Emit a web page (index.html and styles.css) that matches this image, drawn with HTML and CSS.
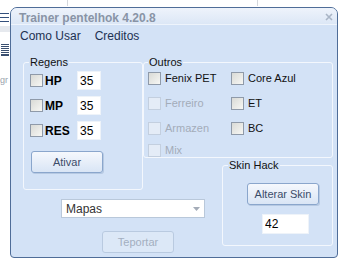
FILE: index.html
```html
<!DOCTYPE html>
<html lang="pt">
<head>
  <meta charset="UTF-8" />
  <title>Trainer pentelhok 4.20.8</title>
  <link rel="stylesheet" href="styles.css">
</head>
<body>

  <!-- restos da janela de trás -->
  <div class="desk">
    <span class="bit bit-a"></span>
    <span class="bit bit-b"></span>
    <span class="bit bit-c"></span>
    <span class="bit bit-d"></span>
    <span class="bit bit-e"></span>
    <span class="bit bit-f"></span>
    <span class="bit bit-g"></span>
    <span class="bit-text">gr</span>
  </div>

  <div class="window">
    <div class="titlebar">
      <span class="title">Trainer pentelhok 4.20.8</span>
      <svg class="close" width="8" height="8" viewBox="0 0 8 8">
        <path d="M1 1 L7 7 M7 1 L1 7" stroke="#a9b5c6" stroke-width="1.6" />
      </svg>
    </div>

    <div class="menu">
      <span>Como Usar</span>
      <span>Creditos</span>
    </div>

    <div class="panel">
      <fieldset class="group regens">
        <legend>Regens</legend>
        <div class="row">
          <span class="box"></span>
          <span class="big">HP</span>
          <input class="num" type="text" value="35" />
        </div>
        <div class="row">
          <span class="box"></span>
          <span class="big">MP</span>
          <input class="num" type="text" value="35" />
        </div>
        <div class="row">
          <span class="box"></span>
          <span class="big">RES</span>
          <input class="num" type="text" value="35" />
        </div>
        <button class="btn ativar">Ativar</button>
      </fieldset>

      <fieldset class="group outros">
        <legend>Outros</legend>
        <div class="checks">
          <label class="chk"><span class="box"></span>Fenix PET</label>
          <label class="chk"><span class="box"></span>Core Azul</label>
          <label class="chk off"><span class="box"></span>Ferreiro</label>
          <label class="chk"><span class="box"></span>ET</label>
          <label class="chk off"><span class="box"></span>Armazen</label>
          <label class="chk"><span class="box"></span>BC</label>
          <label class="chk off"><span class="box"></span>Mix</label>
        </div>
      </fieldset>

      <fieldset class="group skin">
        <legend>Skin Hack</legend>
        <button class="btn">Alterar Skin</button>
        <input class="num skin-num" type="text" value="42" />
      </fieldset>

      <div class="bottom">
        <div class="combo">
          <span>Mapas</span>
          <svg width="7" height="4" viewBox="0 0 7 4">
            <path d="M0 0 L7 0 L3.5 4 Z" fill="#a4acb8" />
          </svg>
        </div>
        <button class="btn off teleport">Teportar</button>
      </div>
    </div>
  </div>

</body>
</html>
```

FILE: styles.css
```css
body {
  margin: 0;
  background-color: #fff;
  font-family: "Liberation Sans", Arial, sans-serif;
  font-size: 11px;
  color: #111;
  position: relative;
  height: 263px;
  overflow: hidden;
}

.desk .bit {
  position: absolute;
  display: block;
}

.bit-a { left: 0; top: 13px; width: 9px; height: 1px; background: #34507c; }
.bit-b { left: 0; top: 17px; width: 9px; height: 1px; background: #34507c; }
.bit-c { left: 0; top: 21px; width: 9px; height: 1px; background: #34507c; }
.bit-d { left: 0; top: 26px; width: 10px; height: 6px; background: #e6e9ee; }
.bit-e { left: 1px; top: 44px; width: 8px; height: 10px; border-top: 1px solid #3a4f70; border-bottom: 1px solid #3a4f70; background: repeating-linear-gradient(#fff 0 1px, #3a4f70 1px 2px); }
.bit-f { left: 67px; top: 0; width: 1px; height: 6px; background: #d5d8dd; }
.bit-g { left: 257px; top: 0; width: 1px; height: 6px; background: #d5d8dd; }

.bit-text {
  position: absolute;
  left: 0;
  top: 75px;
  color: #9aa3ae;
  font-size: 9px;
}

.window {
  position: relative;
  margin: 7px 0 0 10px;
  width: 328px;
  height: 251px;
  box-sizing: border-box;
  border: 1px solid #4f6d98;
  border-radius: 7px 7px 4px 4px;
  background-color: #d3e2f6;
  overflow: hidden;
}

.titlebar {
  height: 17px;
  padding: 3px 0 0 8px;
  box-sizing: border-box;
  background: linear-gradient(#eef3fb, #dce7f6);
  border-bottom: 1px solid #eef4fc;
  display: flex;
  justify-content: space-between;
  align-items: flex-start;
}

.title {
  font-size: 12px;
  font-weight: bold;
  line-height: 14px;
  color: #8994a6;
}

.close {
  margin: 2px 4px 0 0;
}

.menu {
  height: 22px;
  padding: 4px 0 0 9px;
  box-sizing: border-box;
  display: flex;
  gap: 14px;
  font-size: 12px;
  line-height: 14px;
  color: #1d3152;
}

.panel {
  margin-top: 8px;
  padding-left: 12px;
  display: grid;
  grid-template-columns: 120px 79px 111px;
  grid-template-rows: 103px 32px 56px auto;
}

.group {
  margin: 0;
  min-width: 0;
  border: 1px solid #f3f7fd;
  border-radius: 3px;
  box-sizing: border-box;
}

.group legend {
  padding: 0 1px;
  margin-left: 0;
  font-size: 11px;
  line-height: 14px;
  color: #111;
}

.regens {
  grid-column: 1;
  grid-row: 1 / 3;
  padding: 2px 0 0 6px;
  display: flex;
  flex-direction: column;
  gap: 6px;
}

.regens legend {
  margin-left: -1px;
}

.row {
  display: flex;
  align-items: center;
  height: 19px;
}

.box {
  display: inline-block;
  width: 11px;
  height: 11px;
  border: 1px solid #8f9aa9;
  background: linear-gradient(135deg, #d9dad6, #f7f7f4);
  flex-shrink: 0;
}

.big {
  width: 34px;
  padding-left: 2px;
  box-sizing: border-box;
  font-size: 12px;
  font-weight: bold;
  color: #000;
}

.num {
  width: 24px;
  height: 19px;
  box-sizing: border-box;
  padding: 0 0 0 2px;
  border: 1px solid #eef3f9;
  background: #fff;
  font-family: "Liberation Sans", Arial, sans-serif;
  font-size: 12px;
  color: #000;
  outline: none;
}

.btn {
  width: 72px;
  height: 22px;
  padding: 0;
  border: 1px solid #8aa6cc;
  border-radius: 3px;
  background: linear-gradient(#f5f8fd, #d9e5f5);
  box-shadow: 1px 1px 0 #b6c9e2;
  font-family: "Liberation Sans", Arial, sans-serif;
  font-size: 11px;
  color: #3b4c69;
}

.ativar {
  margin: 5px 0 0 1px;
}

.outros {
  grid-column: 2 / 4;
  grid-row: 1;
  padding: 3px 0 0 4px;
}

.checks {
  display: grid;
  grid-template-columns: 83px 90px;
  grid-template-rows: 25px 25px 22px 13px;
}

.chk {
  display: flex;
  align-items: flex-start;
  gap: 4px;
  line-height: 13px;
  color: #111;
}

.chk.off {
  color: #a3acb9;
}

.chk.off .box {
  border-color: #c3cfdf;
  background: #e4ecf7;
}

.skin {
  grid-column: 3;
  grid-row: 2 / 4;
  padding: 11px 0 0 24px;
  display: flex;
  flex-direction: column;
  align-items: flex-start;
  gap: 9px;
}

.skin legend {
  margin-left: -19px;
}

.skin-num {
  width: 47px;
  height: 20px;
  margin-left: 15px;
}

.bottom {
  grid-column: 1 / 3;
  grid-row: 3 / 5;
  padding: 9px 0 0 38px;
  display: flex;
  flex-direction: column;
  align-items: flex-start;
  gap: 13px;
}

.combo {
  width: 144px;
  height: 19px;
  box-sizing: border-box;
  padding: 0 4px 0 4px;
  border: 1px solid #b9c8da;
  background: #fff;
  display: flex;
  align-items: center;
  justify-content: space-between;
  font-size: 12px;
  color: #333;
}

.btn.off {
  border-color: #b9cae0;
  background: #dce8f7;
  box-shadow: none;
  color: #a3afc0;
}

.teleport {
  margin-left: 41px;
}
```
